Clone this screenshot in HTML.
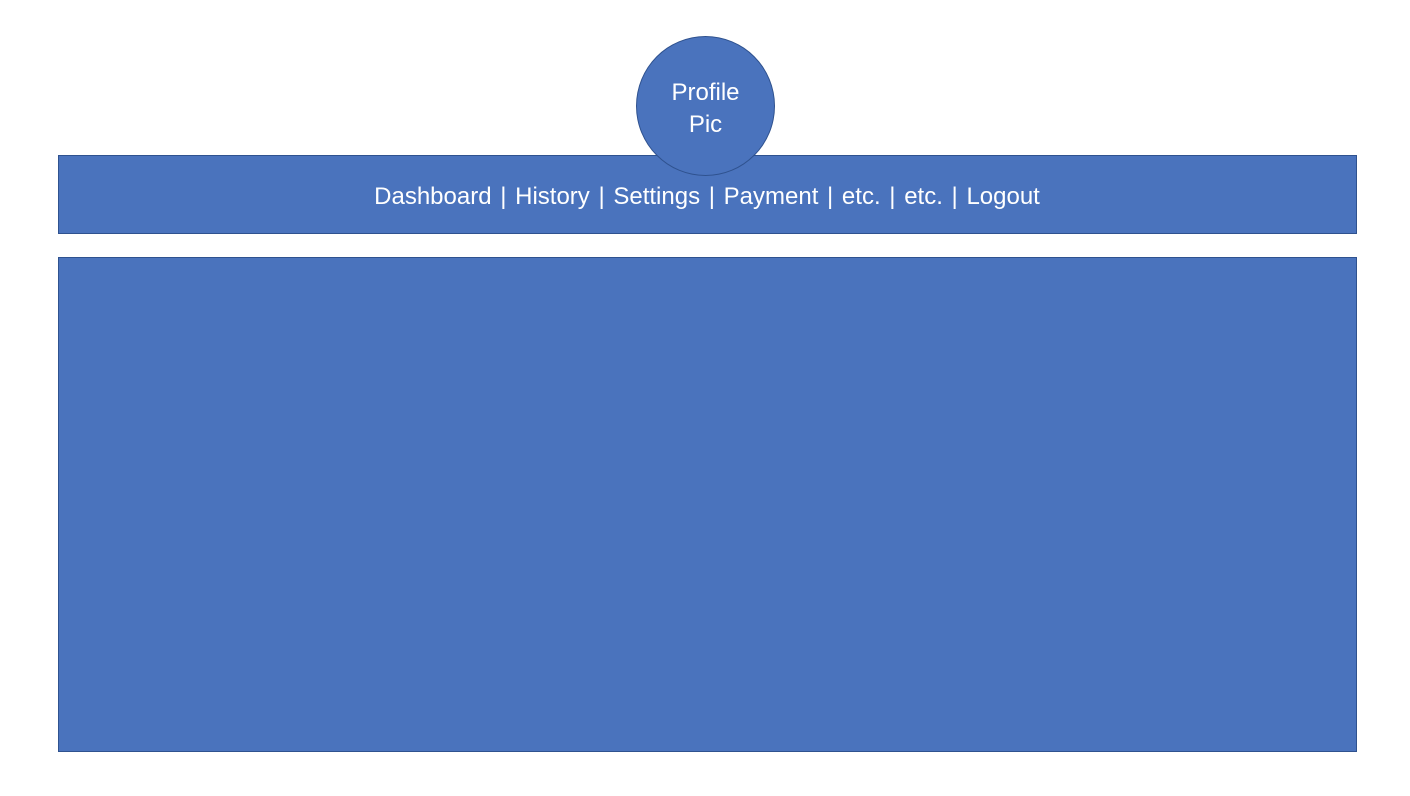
<!DOCTYPE html>
<html><head><style>
body{margin:0;width:1410px;height:796px;background:#fff;position:relative;overflow:hidden;font-family:"Liberation Sans",sans-serif}
.b{position:absolute;background:#4a73bd;border:1px solid #2f528f;box-sizing:border-box}
.nav{left:58px;top:155px;width:1299px;height:79px}
.main{left:58px;top:257px;width:1299px;height:495px}
.c{position:absolute;left:636px;top:36px;width:139px;height:140px;border-radius:50%;background:#4a73bd;border:1px solid #2f528f;box-sizing:border-box;color:#fff;font-size:24px;text-align:center;line-height:32px;padding-top:40px}
.t{position:absolute;left:0;width:1410px;top:182px;text-align:center;color:#fff;font-size:24px;line-height:30px;word-spacing:2px;padding-left:4px;box-sizing:border-box}
</style></head><body>
<div class="b nav"></div>
<div class="t">Dashboard | History | Settings | Payment | etc. | etc. | Logout</div>
<div class="c">Profile<br>Pic</div>
<div class="b main"></div>
</body></html>
